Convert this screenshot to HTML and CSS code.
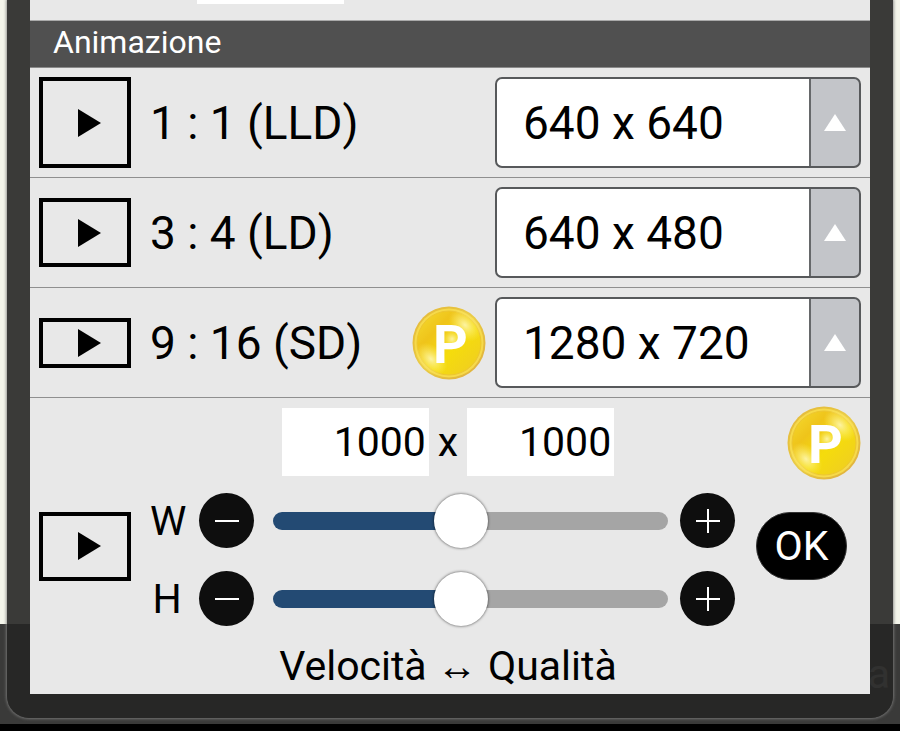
FILE: index.html
```html
<!DOCTYPE html>
<html lang="it">
<head>
<meta charset="UTF-8">
<meta name="viewport" content="width=device-width, initial-scale=1.0">
<title>Animazione</title>
<link rel="stylesheet" href="styles.css">
</head>
<body>
    <div class="bottom-bar">a</div>

    <svg class="defs" width="0" height="0" aria-hidden="true">
        <defs>
            <linearGradient id="rim" x1="0" y1="0" x2="1" y2="1">
                <stop offset="0" stop-color="#e5b93c"/>
                <stop offset="0.5" stop-color="#e8c840"/>
                <stop offset="1" stop-color="#dfae3e"/>
            </linearGradient>
            <linearGradient id="gold" x1="0.1" y1="0.1" x2="0.9" y2="0.9">
                <stop offset="0" stop-color="#f3d42a"/>
                <stop offset="0.25" stop-color="#efc41a"/>
                <stop offset="0.6" stop-color="#f5dc0c"/>
                <stop offset="1" stop-color="#f0cf20"/>
            </linearGradient>
            <radialGradient id="shine">
                <stop offset="0" stop-color="#fffbc8" stop-opacity="0.8"/>
                <stop offset="1" stop-color="#fff27a" stop-opacity="0"/>
            </radialGradient>
            <symbol id="coin" viewBox="0 0 74 74">
                <circle cx="37" cy="37" r="36.5" fill="url(#rim)"/>
                <circle cx="37" cy="37" r="34.5" fill="#f6da4a"/>
                <circle cx="37" cy="37" r="32" fill="url(#gold)" stroke="#edc630" stroke-width="1"/>
                <ellipse cx="53" cy="19" rx="19" ry="13" fill="url(#shine)" transform="rotate(45 53 19)"/>
                <ellipse cx="19" cy="53" rx="19" ry="13" fill="url(#shine)" transform="rotate(45 19 53)"/>
                <circle cx="40" cy="33" r="9" fill="url(#shine)"/>
                <text x="21" y="57" class="coin-letter">P</text>
            </symbol>
        </defs>
    </svg>

    <div class="dialog">
        <div class="panel">
            <div class="previous"><div class="previous-box"></div></div>
            <h2>Animazione</h2>

            <div class="row">
                <button class="frame square" aria-label="1 : 1"><svg width="24" height="28" viewBox="0 0 24 28"><path d="M1 0 L24 14 L1 28 Z"/></svg></button>
                <label for="size11">1 : 1 (LLD)</label>
                <span class="select">
                    <select id="size11"><option>640 x 640</option></select>
                </span>
            </div>

            <div class="row">
                <button class="frame medium" aria-label="3 : 4"><svg width="24" height="28" viewBox="0 0 24 28"><path d="M1 0 L24 14 L1 28 Z"/></svg></button>
                <label for="size34">3 : 4 (LD)</label>
                <span class="select">
                    <select id="size34"><option>640 x 480</option></select>
                </span>
            </div>

            <div class="row">
                <button class="frame wide" aria-label="9 : 16"><svg width="24" height="28" viewBox="0 0 24 28"><path d="M1 0 L24 14 L1 28 Z"/></svg></button>
                <label for="size916">9 : 16 (SD)</label>
                <svg class="coin"><use href="#coin"/></svg>
                <span class="select">
                    <select id="size916"><option>1280 x 720</option></select>
                </span>
            </div>

            <div class="custom">
                <button class="frame medium" aria-label="Personalizzato"><svg width="24" height="28" viewBox="0 0 24 28"><path d="M1 0 L24 14 L1 28 Z"/></svg></button>
                <div class="controls">
                    <div class="dimensions">
                        <input type="text" id="width" aria-label="W" value="1000">
                        <span>x</span>
                        <input type="text" id="height" aria-label="H" value="1000">
                    </div>
                    <div class="slider">
                        <label for="rangeW">W</label>
                        <button class="round" aria-label="W -"><svg width="24" height="24"><path d="M0 12 H24"/></svg></button>
                        <input type="range" id="rangeW" min="0" max="2120" value="1000">
                        <button class="round" aria-label="W +"><svg width="24" height="24"><path d="M0 12 H24 M12 0 V24"/></svg></button>
                    </div>
                    <div class="slider">
                        <label for="rangeH">H</label>
                        <button class="round" aria-label="H -"><svg width="24" height="24"><path d="M0 12 H24"/></svg></button>
                        <input type="range" id="rangeH" min="0" max="2120" value="1000">
                        <button class="round" aria-label="H +"><svg width="24" height="24"><path d="M0 12 H24 M12 0 V24"/></svg></button>
                    </div>
                    <p>Velocità ↔ Qualità</p>
                </div>
                <div class="confirm">
                    <svg class="coin"><use href="#coin"/></svg>
                    <button class="ok">OK</button>
                </div>
            </div>
        </div>
    </div>
</body>
</html>
```

FILE: styles.css
```css
* {
    box-sizing: border-box;
}

body {
    margin: 0;
    min-height: 100vh;
    overflow: hidden;
    background: #f4f5eb;
    color: #000;
    font-family: Roboto, "Liberation Sans", sans-serif;
    font-size: 41px;
    line-height: 48px;
}

button, input, select {
    margin: 0;
    padding: 0;
    border: none;
    border-radius: 0;
    font: inherit;
    color: inherit;
}

.defs {
    position: absolute;
}

/* toolbar of the page below the dialog */
.bottom-bar {
    position: fixed;
    left: 0;
    right: 0;
    bottom: 0;
    height: 107px;
    padding: 26px 10px 0;
    background: #3a3a39;
    border-bottom: 7px solid #000;
    color: #999;
    text-align: right;
}

.dialog {
    position: relative;
    margin: 0 7px;
    padding: 0 23px 24px;
    background: rgba(38, 38, 37, 0.9);
    border-radius: 0 0 22px 22px;
    box-shadow: 0 0 3px 1px rgba(130, 130, 130, 0.8);
}

.panel {
    background: #e8e8e8;
}

.previous {
    height: 21px;
    padding-left: 167px;
    border-bottom: 1px solid #aaa;
}

.previous-box {
    width: 147px;
    height: 4px;
    background: #fff;
}

h2 {
    height: 47px;
    margin: 0;
    padding-left: 23px;
    background: #505050;
    border-bottom: 1px solid #8a8a8a;
    color: #fff;
    font-size: 32px;
    font-weight: normal;
    line-height: 42px;
}

.row {
    display: flex;
    align-items: center;
    padding: 9px;
    border-bottom: 1px solid #8f8f8f;
    font-size: 46px;
}

.row label {
    flex: 1;
    margin-left: 19px;
}

.frame {
    display: flex;
    align-items: center;
    justify-content: center;
    width: 92px;
    padding-left: 8px;
    background: none;
    border: 4px solid #000;
}

.square {
    height: 91px;
}

.medium {
    height: 69px;
}

.wide {
    height: 50px;
}

.select {
    position: relative;
    width: 366px;
    height: 91px;
    margin-left: 9px;
}

.select select {
    width: 100%;
    height: 100%;
    padding-left: 26px;
    appearance: none;
    background: linear-gradient(to left, #c3c5c9 48px, #66686a 48px, #66686a 50px, #fff 50px);
    border: 2px solid #57595b;
    border-radius: 7px;
}

.select::after {
    content: "";
    position: absolute;
    right: 15px;
    top: 37px;
    border: solid transparent;
    border-width: 0 11px 17px;
    border-bottom-color: #fff;
    pointer-events: none;
}

.coin {
    width: 74px;
    height: 74px;
}

.coin-letter {
    fill: #fff;
    font-family: Roboto, sans-serif;
    font-size: 54px;
    font-weight: bold;
}

.custom {
    display: grid;
    grid-template-columns: 92px 1fr 105px;
    align-items: center;
    padding: 0 9px;
}

.controls {
    padding: 10px 10px 4px 19px;
}

.dimensions {
    display: flex;
    align-items: center;
    justify-content: center;
    gap: 9px;
    margin-bottom: 17px;
}

.dimensions input {
    width: 147px;
    height: 68px;
    padding-right: 3px;
    background: #fff;
    text-align: right;
}

.slider {
    display: flex;
    align-items: center;
    height: 55px;
    margin: 0 11px 23px 0;
}

.slider label {
    width: 34px;
    margin-right: 15px;
    text-align: center;
}

.round {
    display: flex;
    align-items: center;
    justify-content: center;
    flex: none;
    width: 55px;
    height: 55px;
    background: #0e0e0e;
    border-radius: 50%;
}

.round path {
    stroke: #fff;
    stroke-width: 2;
}

input[type="range"] {
    flex: 1;
    min-width: 0;
    height: 55px;
    margin: 0 12px 0 19px;
    appearance: none;
    background: none;
}

input[type="range"]::-webkit-slider-runnable-track {
    height: 18px;
    border-radius: 9px;
    background: linear-gradient(to right, #234a73 47%, #a5a5a5 47%);
}

input[type="range"]::-webkit-slider-thumb {
    appearance: none;
    width: 54px;
    height: 54px;
    margin-top: -18px;
    border-radius: 50%;
    background: #fff;
    box-shadow: 0 0 3px rgba(0, 0, 0, 0.7);
}

.controls p {
    margin: -7px 0 0;
    text-align: center;
}

.confirm {
    display: grid;
    align-self: stretch;
}

.confirm .coin {
    grid-area: 1 / 1;
    justify-self: end;
    margin-top: 8px;
}

.ok {
    grid-area: 1 / 1;
    align-self: center;
    width: 91px;
    height: 68px;
    background: #000;
    border: 1px solid #333;
    border-radius: 34px;
    color: #fff;
}
```
